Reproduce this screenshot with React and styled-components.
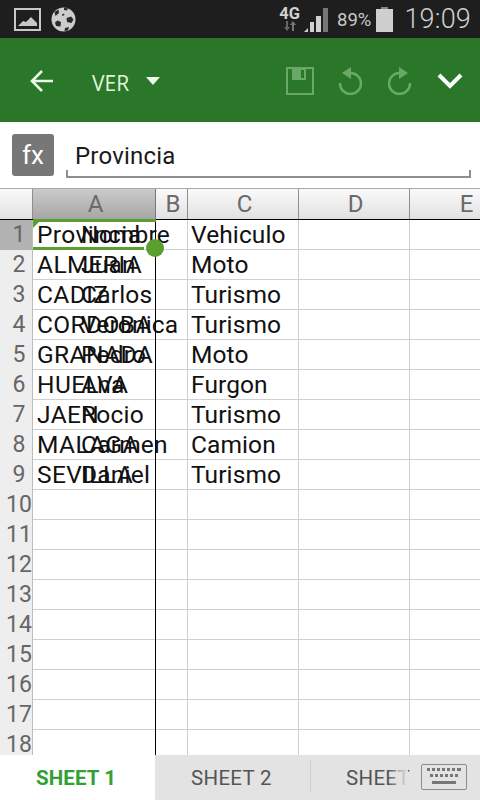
import styled, { createGlobalStyle } from "styled-components";

const Global = createGlobalStyle`
html, body { margin: 0; padding: 0; background: #fff; }
* { box-sizing: border-box; }
`

const Page = styled.div`
width: 480px;
height: 800px;
display: flex;
flex-direction: column;
overflow: hidden;
font-family: Roboto, "Liberation Sans", sans-serif;
background: #fff;
`

const StatusBar = styled.div`
height: 38px;
flex: none;
background: #1e1e1e;
color: #c4c4c4;
display: flex;
align-items: center;
padding: 0 9px 0 14px;
`
const StatusLeft = styled.div`
display: flex;
align-items: center;
gap: 10px;
margin-right: auto;
`
const NetBox = styled.div`
width: 21px;
height: 26px;
display: flex;
flex-direction: column;
align-items: center;
margin-right: 4px;
`
const NetLabel = styled.span`
font-size: 16.500px;
font-weight: 700;
line-height: 15px;
color: #d2d2d2;
`
const Percent = styled.span`
font-size: 18.500px;
margin: 1px 5px 0 8px;
color: #c8c8c8;
`
const Clock = styled.span`
font-size: 27px;
font-weight: 300;
margin-left: 11px;
color: #d0d0d0;
letter-spacing: 0.2px;
`

const Toolbar = styled.div`
height: 84px;
flex: none;
background: #2a772a;
display: flex;
align-items: center;
padding: 1px 17px 0 30px;
`
const ViewLabel = styled.span`
font-family: "Open Sans", sans-serif;
font-size: 21px;
line-height: 28px;
color: #e2f6de;
margin: 4px 17px 0 38px;
`
const Spacer = styled.div`
flex: 1;
`
const ToolIcon = styled.svg`
display: block;
margin-left: ${p => p.$gap || 0}px;
`

const FormulaBar = styled.div`
height: 66px;
flex: none;
display: flex;
padding: 12px 9px 0 12px;
background: #fff;
`
const FxBox = styled.div`
width: 42px;
height: 42px;
flex: none;
background: #777;
border-radius: 3px;
color: #fff;
font-size: 26px;
display: flex;
align-items: center;
justify-content: center;
`
const FormulaInput = styled.div`
flex: 1;
height: 44px;
margin-left: 12px;
padding: 7px 0 0 9px;
font-size: 24px;
line-height: 30px;
letter-spacing: 0.2px;
color: #1a1a1a;
border-bottom: 2px solid #8f8f8f;
position: relative;
&::before, &::after {
  content: "";
  position: absolute;
  bottom: 0;
  width: 2px;
  height: 6px;
  background: #8f8f8f;
}
&::before { left: 0; }
&::after { right: 0; }
`

const Sheet = styled.div`
flex: 1;
min-height: 0;
overflow: hidden;
position: relative;
`
const Columns = "33px 123px 32px 111px 111px 111px"

const HeaderRow = styled.div`
height: 32px;
display: grid;
grid-template-columns: ${Columns};
border-top: 1px solid #a8a8a8;
border-bottom: 1px solid #000;
`
const ColHead = styled.div`
background: ${p => p.$active
    ? "linear-gradient(#cbcbcb, #a6a6a6)"
    : "linear-gradient(#fafafa, #e1e1e1)"};
border-right: 1px solid ${p => p.$dark ? "#777" : "#8e8e8e"};
color: #6a6a6a;
font-size: 24px;
line-height: 30px;
padding-left: 3px;
text-align: center;
`
const Row = styled.div`
height: 30px;
display: grid;
grid-template-columns: ${Columns};
border-bottom: 1px solid #cfcfcf;
`
const RowHead = styled.div`
background: ${p => p.$active ? "#b2b2b2" : "#eeeeee"};
border-right: 1px solid #bdbdbd;
color: #666;
font-size: 23px;
line-height: 30px;
padding-left: 6px;
text-align: center;
margin-bottom: -1px;
`
const Cell = styled.div`
position: relative;
border-right: 1px solid ${p => p.$frozen ? "#000" : "#cfcfcf"};
margin-bottom: ${p => p.$frozen ? "-1px" : "0"};
padding-left: ${p => p.$frozen ? "4px" : "3px"};
font-size: 24.5px;
line-height: 30px;
letter-spacing: ${p => p.$frozen ? "0.4px" : "0.1px"};
color: #111;
white-space: nowrap;
`
const Overflowing = styled.span`
position: absolute;
left: 48px;
top: 0;
z-index: 1;
letter-spacing: 0.2px;
`
const SelectionBox = styled.div`
position: absolute;
left: 33px;
top: 31px;
width: 123px;
height: 31px;
border-top: 3px solid #5c9f30;
pointer-events: none;
&::before {
  content: "";
  position: absolute;
  left: 0;
  top: 0;
  border-top: 6px solid #5c9f30;
  border-right: 6px solid transparent;
}
&::after {
  content: "";
  position: absolute;
  left: 0;
  bottom: 0;
  width: 111px;
  height: 3px;
  background: #5c9f30;
}
`
const Handle = styled.div`
position: absolute;
left: 146px;
top: 51px;
width: 18px;
height: 18px;
border-radius: 50%;
background: #5c9f30;
z-index: 2;
`

const TabBar = styled.div`
height: 45px;
flex: none;
display: flex;
background: #e2e3e2;
position: relative;
z-index: 3;
`
const Tab = styled.div`
width: ${p => p.$width}px;
flex: none;
display: flex;
align-items: center;
padding-left: ${p => p.$pad}px;
font-size: 20.500px;
letter-spacing: ${p => p.$active ? "0.1px" : "0.3px"};
overflow: hidden;
white-space: nowrap;
background: ${p => p.$active ? "#fff" : "transparent"};
color: ${p => p.$active ? "#33a035" : "#555"};
font-weight: ${p => p.$active ? 700 : 400};
`
const TabDivider = styled.div`
width: 1px;
height: 32px;
margin-top: 5px;
background: #cfd0cf;
flex: none;
`
const Fade = styled.div`
position: absolute;
left: 388px;
top: 0;
width: 20px;
height: 100%;
background: linear-gradient(90deg, rgba(226,227,226,0), #e2e3e2);
`
const KeyboardButton = styled.div`
position: absolute;
right: 13px;
top: 9px;
width: 46px;
height: 26px;
border: 1px solid #8b8b8b;
border-radius: 2px;
display: flex;
align-items: center;
justify-content: center;
`

const rows = [
    ["Provincia", "Nombre", "Vehiculo"],
    ["ALMERIA", "Juan", "Moto"],
    ["CADIZ", "Carlos", "Turismo"],
    ["CORDOBA", "Veronica", "Turismo"],
    ["GRANADA", "Pedro", "Moto"],
    ["HUELVA", "Ana", "Furgon"],
    ["JAEN", "Rocio", "Turismo"],
    ["MALAGA", "Carmen", "Camion"],
    ["SEVILLA", "Daniel", "Turismo"],
]

function ImageIcon() {
    return (
        <svg width="27" height="23" viewBox="0 0 27 23">
            <rect x="1" y="1" width="25" height="21" fill="none" stroke="#c8c8c8" strokeWidth="2" />
            <path d="M4 18 L9 13 L12 14 L17 9 L23 15 L23 18 Z" fill="#c8c8c8" />
        </svg>
    )
}

function BallIcon() {
    return (
        <svg width="25" height="25" viewBox="0 0 25 25">
            <circle cx="12.5" cy="12.5" r="12" fill="#cdcdcd" />
            <path d="M3.500 5 L7.500 2.500 L8 6 L4.500 9 Z M13 0.500 L17 1.500 L16 3.500 L13 3 Z M15.500 11 L20 9.500 L22.500 12.500 L20.500 16 L16 15 Z M6.500 13.500 L10 15 L9.500 19.500 L5 19 L4 15.500 Z M11 7.500 L13 6.500 L13.500 8 L11.500 9 Z M14 21 L18 20 L17 23.500 L13.500 24 Z" fill="#2a2a2a" />
        </svg>
    )
}

function SignalIcon() {
    return (
        <svg width="25" height="25" viewBox="0 0 25 25">
            <path d="M0 25 L4 25 L4 21 Z" fill="#d0d0d0" />
            <rect x="6" y="15" width="4" height="10" fill="#d0d0d0" />
            <rect x="12" y="9" width="5" height="16" fill="#d0d0d0" />
            <rect x="19" y="1" width="5" height="24" fill="#777" />
        </svg>
    )
}

function BatteryIcon() {
    return (
        <svg width="17" height="25" viewBox="0 0 17 25">
            <rect x="5" y="0" width="7" height="3" fill="#888" />
            <rect x="0" y="2" width="17" height="23" fill="#cfcfcf" />
        </svg>
    )
}

function DataArrows() {
    return (
        <svg width="14" height="11" viewBox="0 0 14 11">
            <path d="M3 0 L5 0 L5 6 L7 6 L4 10 L1 6 L3 6 Z" fill="#666" />
            <path d="M9 10 L11 10 L11 4 L13 4 L10 0 L7 4 L9 4 Z" fill="#777" />
        </svg>
    )
}

function KeyboardIcon() {
    return (
        <svg width="36" height="20" viewBox="0 0 36 20">
            <path d="M1 1h3v3H1zM6 1h3v3H6zM11 1h3v3h-3zM16 1h3v3h-3zM21 1h3v3h-3zM26 1h3v3h-3zM31 1h4v3h-4zM4 7h3v3H4zM9 7h3v3H9zM14 7h3v3h-3zM19 7h3v3h-3zM24 7h3v3h-3zM29 7h3v3h-3z" fill="#777" />
            <rect x="6" y="14" width="24" height="3" fill="#777" />
        </svg>
    )
}

export default function App() {
    const faded = "#6aa86a"
    return (
        <Page>
            <Global />
            <StatusBar>
                <StatusLeft>
                    <ImageIcon />
                    <BallIcon />
                </StatusLeft>
                <NetBox>
                    <NetLabel>4G</NetLabel>
                    <DataArrows />
                </NetBox>
                <SignalIcon />
                <Percent>89%</Percent>
                <BatteryIcon />
                <Clock>19:09</Clock>
            </StatusBar>

            <Toolbar>
                <ToolIcon width="24" height="24" viewBox="0 0 24 24">
                    <path d="M23 12 L2 12 M12 2 L2 12 L12 22" fill="none" stroke="#e8f8e4" strokeWidth="2.600" />
                </ToolIcon>
                <ViewLabel>VER</ViewLabel>
                <ToolIcon width="14" height="8" viewBox="0 0 14 8">
                    <path d="M0 0 L14 0 L7 8 Z" fill="#f0faee" />
                </ToolIcon>
                <Spacer />
                <ToolIcon width="28" height="28" viewBox="0 0 28 28">
                    <rect x="1" y="1" width="26" height="26" fill="none" stroke={faded} strokeWidth="2" />
                    <path d="M6 2 L20 2 L20 13 L6 13 Z" fill={faded} />
                    <rect x="15" y="3" width="3" height="8" fill="#2a772a" />
                </ToolIcon>
                <ToolIcon $gap={24} width="24" height="28" viewBox="0 0 24 28">
                    <path d="M12 6 A10.500 10.500 0 1 1 2 16" fill="none" stroke={faded} strokeWidth="2.500" />
                    <path d="M13 0 L13 12 L4 6 Z" fill={faded} />
                </ToolIcon>
                <ToolIcon $gap={26} width="24" height="28" viewBox="0 0 24 28">
                    <path d="M12 6 A10.500 10.500 0 1 0 22 16" fill="none" stroke={faded} strokeWidth="2.500" />
                    <path d="M11 0 L11 12 L20 6 Z" fill={faded} />
                </ToolIcon>
                <ToolIcon $gap={25} width="26" height="18" viewBox="0 0 26 18">
                    <path d="M2 3 L13 14 L24 3" fill="none" stroke="#fff" strokeWidth="4" />
                </ToolIcon>
            </Toolbar>

            <FormulaBar>
                <FxBox>fx</FxBox>
                <FormulaInput>Provincia</FormulaInput>
            </FormulaBar>

            <Sheet>
                <HeaderRow>
                    <ColHead />
                    <ColHead $active $dark>A</ColHead>
                    <ColHead>B</ColHead>
                    <ColHead>C</ColHead>
                    <ColHead>D</ColHead>
                    <ColHead>E</ColHead>
                </HeaderRow>
                {Array.from({ length: 18 }, (_, i) => {
                    const r = rows[i]
                    return (
                        <Row key={i}>
                            <RowHead $active={i === 0}>{i + 1}</RowHead>
                            <Cell $frozen>
                                {r && r[0]}
                                {r && <Overflowing>{r[1]}</Overflowing>}
                            </Cell>
                            <Cell />
                            <Cell>{r && r[2]}</Cell>
                            <Cell />
                            <Cell />
                        </Row>
                    )
                })}
                <SelectionBox />
                <Handle />
            </Sheet>

            <TabBar>
                <Tab $active $width={155} $pad={36}>SHEET 1</Tab>
                <Tab $width={155} $pad={36}>SHEET 2</Tab>
                <TabDivider />
                <Tab $width={100} $pad={35}>SHEET 3</Tab>
                <Fade />
                <KeyboardButton>
                    <KeyboardIcon />
                </KeyboardButton>
            </TabBar>
        </Page>
    )
}
